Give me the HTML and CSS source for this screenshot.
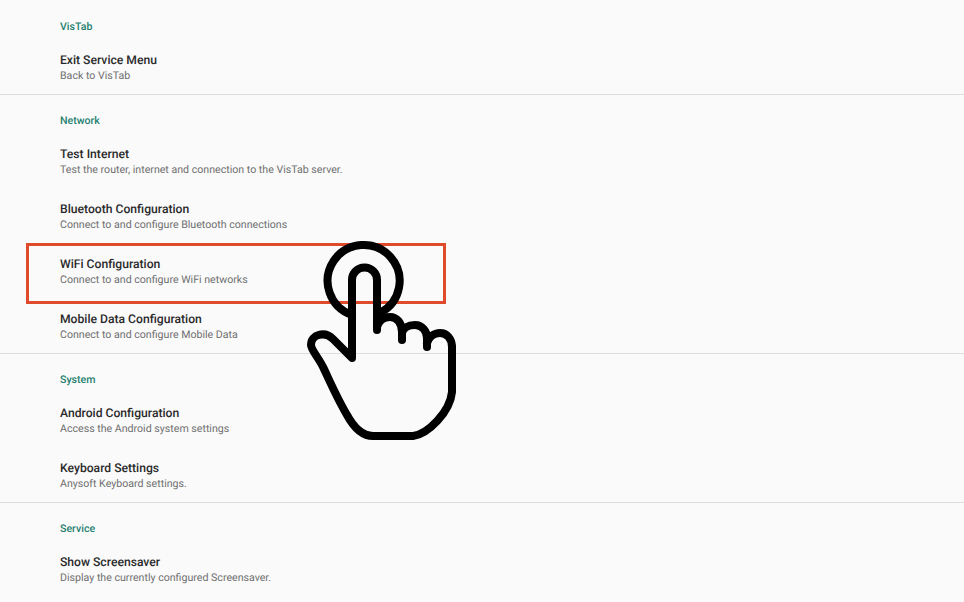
FILE: index.html
```html
<!DOCTYPE html>
<html lang="en">
<head>
<meta charset="utf-8">
<title>Service Menu</title>
<link rel="stylesheet" href="styles.css">
</head>
<body>
<main class="menu">
  <section class="group">
    <h2 class="group-title">VisTab</h2>
    <div class="item"><div class="item-title">Exit Service Menu</div><div class="item-sub">Back to VisTab</div></div>
  </section>
  <section class="group">
    <h2 class="group-title">Network</h2>
    <div class="item"><div class="item-title">Test Internet</div><div class="item-sub">Test the router, internet and connection to the VisTab server.</div></div>
    <div class="item"><div class="item-title">Bluetooth Configuration</div><div class="item-sub">Connect to and configure Bluetooth connections</div></div>
    <div class="item"><div class="item-title">WiFi Configuration</div><div class="item-sub">Connect to and configure WiFi networks</div></div>
    <div class="item"><div class="item-title">Mobile Data Configuration</div><div class="item-sub">Connect to and configure Mobile Data</div></div>
  </section>
  <section class="group">
    <h2 class="group-title">System</h2>
    <div class="item"><div class="item-title">Android Configuration</div><div class="item-sub">Access the Android system settings</div></div>
    <div class="item"><div class="item-title">Keyboard Settings</div><div class="item-sub">Anysoft Keyboard settings.</div></div>
  </section>
  <section class="group">
    <h2 class="group-title">Service</h2>
    <div class="item"><div class="item-title">Show Screensaver</div><div class="item-sub">Display the currently configured Screensaver.</div></div>
  </section>
</main>
<div class="highlight"></div>
<svg class="hand" width="964" height="602" viewBox="0 0 964 602" fill="none" stroke="#000" stroke-width="8" stroke-linecap="round" stroke-linejoin="round" aria-hidden="true">
  <path d="M352 315A36 36 0 1 1 380 313"/>
  <path d="M377 330V280A12.5 12.5 0 0 0 352 280V358L333 339C325 331 311 334 311 345C311 350 319 358 324 369C331 384 338 400 347 415C353 426 362 436 373 436H413C428 434 450 412 452 392V347"/>
  <path d="M377 327C379 320 384 317 390 317C397 317 402 323 402 332V340"/>
  <path d="M402 333C403 328 408 325 415 325C422 325 427 331 427 338V347"/>
  <path d="M427 343C429 337 434 333 440 333C447 333 452 339 452 347"/>
</svg>
</body>
</html>
```
FILE: styles.css
```css
html, body {
  margin: 0;
  padding: 0;
  height: 602px;
  overflow: hidden;
  background: #fafafa;
}
body {
  position: relative;
  font-family: Roboto, "Liberation Sans", sans-serif;
  text-rendering: geometricPrecision;
}
.group {
  border-top: 1px solid #dedede;
}
.group:first-child {
  border-top: 0;
  padding-top: 1px;
}
.group-title {
  margin: 0;
  height: 38px;
  padding: 19px 0 0 60px;
  box-sizing: border-box;
  font-size: 10.6px;
  line-height: 14px;
  font-weight: 500;
  color: #24806f;
}
.item {
  height: 55px;
  padding-left: 60px;
  box-sizing: border-box;
  padding-top: 13px;
}
.item-title {
  font-size: 12.15px;
  line-height: 17px;
  color: #2a2a2a;
  font-weight: 500;
}
.item-sub {
  font-size: 10.62px;
  line-height: 14px;
  color: #6f6f6f;
}
.highlight {
  position: absolute;
  left: 26px;
  top: 243px;
  width: 420px;
  height: 61px;
  box-sizing: border-box;
  border: 3px solid #df4a2b;
}
.hand {
  position: absolute;
  left: 0;
  top: 0;
}
```
